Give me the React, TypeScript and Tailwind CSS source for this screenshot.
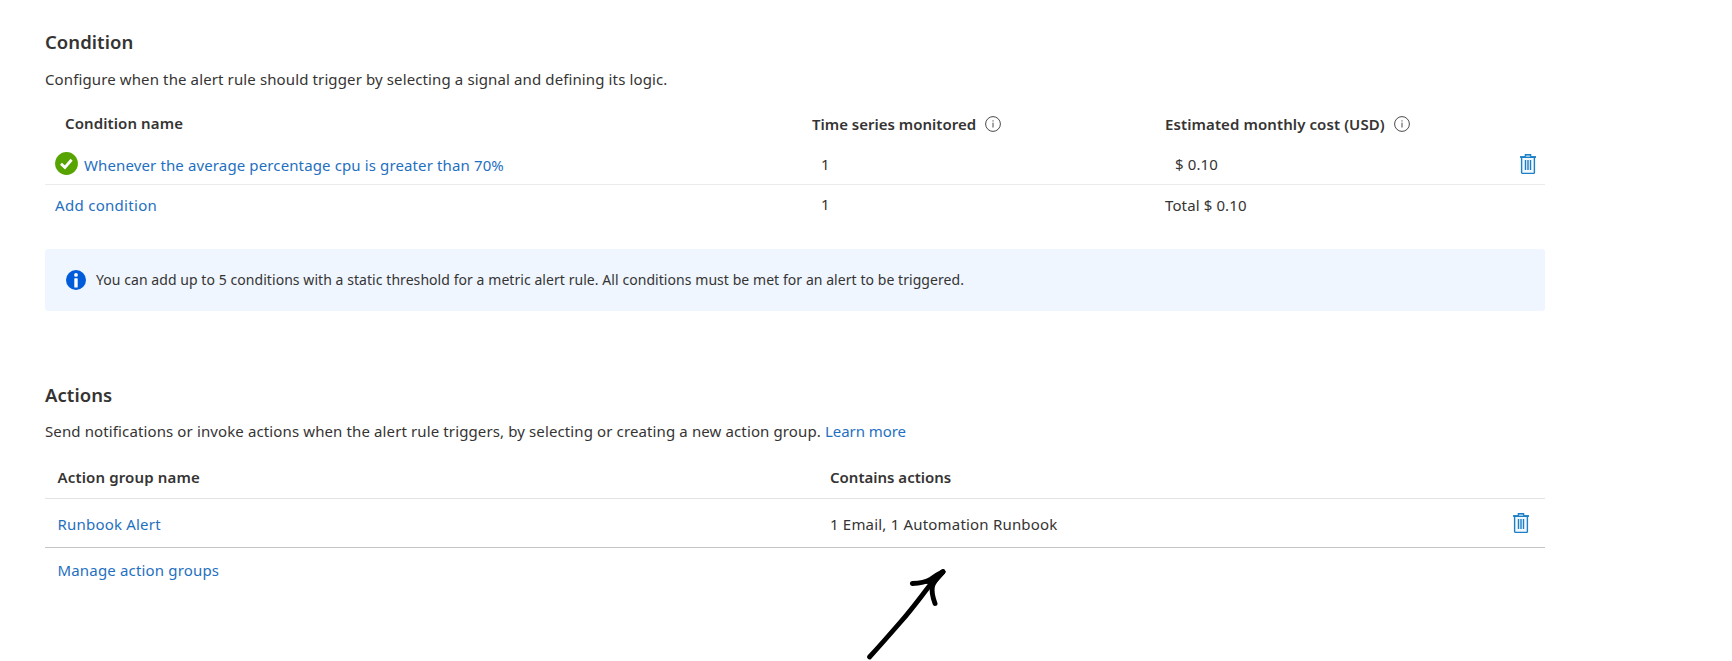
function InfoOutline() {
  return (
    <svg className="-ml-px size-4 shrink-0" viewBox="0 0 16 16" fill="none" stroke="#4a4948">
      <circle cx="8" cy="8" r="7.4" strokeWidth="1" />
      <path d="M8 6.7v4.800" strokeWidth="1" />
      <path d="M8 4.3v1.200" strokeWidth="1" />
    </svg>
  );
}

function SuccessIcon() {
  return (
    <svg className="-mt-px size-[23px] shrink-0" viewBox="0 0 23 23">
      <circle cx="11.5" cy="11.5" r="11.4" fill="#57a300" />
      <path d="M6 11.8l3.9 3.600 6.700-7.600" fill="none" stroke="#fff" strokeWidth="2.8" />
    </svg>
  );
}

function InfoFilled() {
  return (
    <svg className="size-5 shrink-0" viewBox="0 0 20 20">
      <circle cx="10" cy="10" r="10" fill="#015cda" />
      <circle cx="10" cy="4.9" r="1.9" fill="#fff" />
      <rect x="8.3" y="8.2" width="3.4" height="9.2" rx="0.5" fill="#fff" />
    </svg>
  );
}

function TrashIcon() {
  return (
    <svg className="h-5 w-4 shrink-0" viewBox="0 0 16 20" fill="none" stroke="#1f7fc4">
      <path d="M1.6 3.2h12.8v15.2a1 1 0 0 1-1 1H2.6a1 1 0 0 1-1-1z" fill="#f1f9fe" strokeWidth="1.4" />
      <path d="M0 3h16" strokeWidth="1.8" />
      <path d="M5.4 2.8V.8h5.2v2" fill="#bfe0f5" strokeWidth="1.4" />
      <path d="M5.5 6v10M8 6v10M10.5 6v10" strokeWidth="1.4" />
    </svg>
  );
}

function Arrow() {
  return (
    <svg
      className="absolute left-[850px] top-[550px] h-[111px] w-[120px]"
      viewBox="0 0 120 111"
      fill="none"
      stroke="#000"
      strokeWidth="4.9"
      strokeLinecap="round"
      strokeLinejoin="round"
    >
      <path d="M19.500 107C31 94.500 41 83 51 71.500C62 59 71 46.500 80.500 34.500C84.500 29.500 88 25.500 93 21.800" />
      <path d="M62.300 33.500C70 33.300 76 32 81 29C85 26.200 89 23.800 93 21.800L82 34" fill="#000" />
      <path d="M85 53.500C83 48 81.300 42 82.400 36.500C83.500 31 89 26 93 21.800" />
    </svg>
  );
}

const link = "text-[#1f70c0]";

export default function App() {
  return (
    <div className="relative h-[661px] w-[1732px] overflow-hidden bg-white pl-[45px] pt-[30px] font-['Noto_Sans',sans-serif] text-[15px] leading-5 tracking-[0.12px] text-[#353433]">
      <main className="w-[1500px]">
        <section>
          <h2 className="text-[18.5px] leading-6 font-semibold tracking-[0.05px]">Condition</h2>
          <p className="mt-[15px]">Configure when the alert rule should trigger by selecting a signal and defining its logic.</p>

          <div className="mt-[25px] grid h-5 grid-cols-[766px_354px_1fr] font-semibold tracking-[0.1px]">
            <div className="-mt-px pl-5">Condition name</div>
            <div className="flex items-center gap-[10px] pl-px tracking-normal">
              Time series monitored
              <InfoOutline />
            </div>
            <div className="flex items-center gap-[10px]">
              Estimated monthly cost (USD)
              <InfoOutline />
            </div>
          </div>

          <div className="mt-[10px] grid h-[41px] grid-cols-[766px_354px_1fr] items-center border-b border-[#edebe9]">
            <div className="flex items-center gap-[6px] pl-[10px]">
              <SuccessIcon />
              <a className={`${link} pt-0.5 tracking-[0.125px]`}>Whenever the average percentage cpu is greater than 70%</a>
            </div>
            <div className="pl-[10px]">1</div>
            <div className="flex items-center justify-between pl-[10px] pr-[9px]">
              <span>$ 0.10</span>
              <TrashIcon />
            </div>
          </div>

          <div className="grid h-10 grid-cols-[766px_354px_1fr] items-center">
            <a className={`${link} pl-[10px] tracking-[0.3px]`}>Add condition</a>
            <div className="pb-0.5 pl-[10px]">1</div>
            <div>Total $ 0.10</div>
          </div>

          <div className="mt-6 flex h-[62px] items-center gap-[10px] rounded-[3px] bg-[#eff6ff] pl-[21px]">
            <InfoFilled />
            <span className="text-sm tracking-[0.06px]">
              You can add up to 5 conditions with a static threshold for a metric alert rule. All conditions must be met for an alert to be triggered.
            </span>
          </div>
        </section>

        <section className="mt-[72px]">
          <h2 className="text-[18.5px] leading-6 font-semibold tracking-[0.05px]">Actions</h2>
          <p className="mt-[14px]">
            Send notifications or invoke actions when the alert rule triggers, by selecting or creating a new action group.{" "}
            <a className={`${link} tracking-[-0.05px]`}>Learn more</a>
          </p>

          <div className="mt-[15px] grid h-[43px] grid-cols-[785px_1fr] items-center border-b border-[#e3e3e3] font-semibold">
            <div className="pl-[12.5px] tracking-[0.15px]">Action group name</div>
            <div className="tracking-normal">Contains actions</div>
          </div>
          <div className="grid h-[49px] grid-cols-[785px_1fr] items-center border-b border-[#c4c4c4]">
            <a className={`${link} pl-[12.5px] pt-px tracking-[0.2px]`}>Runbook Alert</a>
            <div className="flex items-center justify-between pr-4">
              <span className="pt-px tracking-[0.19px]">1 Email, 1 Automation Runbook</span>
              <TrashIcon />
            </div>
          </div>
          <div className="flex h-11 items-center pl-[12.5px]">
            <a className={`${link} tracking-[0.17px]`}>Manage action groups</a>
          </div>
        </section>
      </main>
      <Arrow />
    </div>
  );
}
